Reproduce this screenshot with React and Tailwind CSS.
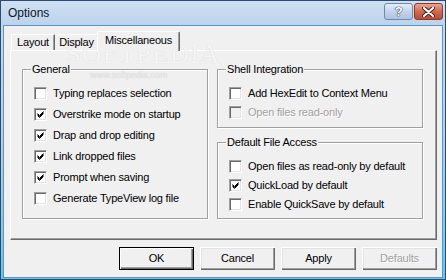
import React from "react";

const font = { fontFamily: '"Liberation Sans", Arial, sans-serif' };

function CheckBox({ checked, disabled }) {
  return (
    <div
      className={`w-[13px] h-[13px] shrink-0 border border-t-[#a0a0a0] border-l-[#a0a0a0] border-b-white border-r-white shadow-[inset_1px_1px_0_#696969,inset_-1px_-1px_0_#e3e3e3] flex items-center justify-center ${
        disabled ? "bg-[#f0f0f0]" : "bg-white"
      }`}
    >
      {checked && (
        <svg width="9" height="9" viewBox="0 0 9 9">
          <path d="M1.5 3.5 L3.5 5.5 L7.5 1.5 M1.5 4.5 L3.5 6.5 L7.5 2.5 M1.5 5.5 L3.5 7.5 L7.5 3.5" stroke="#000" strokeWidth="1" fill="none" />
        </svg>
      )}
    </div>
  );
}

function Row({ label, checked, disabled, h }) {
  return (
    <div className={`flex items-center gap-[6px] ${h}`}>
      <CheckBox checked={checked} disabled={disabled} />
      <span
        className={`leading-[13px] ${
          disabled ? "text-[#a0a0a0] [text-shadow:1px_1px_0_#fff]" : "text-black"
        }`}
      >
        {label}
      </span>
    </div>
  );
}

function Group({ title, className, children }) {
  return (
    <div
      className={`border border-[#a0a0a0] shadow-[inset_1px_1px_0_#fff,1px_1px_0_#fff] flex flex-col ${className}`}
    >
      <div className="-mt-[7px] ml-[8px] w-fit px-[1px] bg-[#f0f0f0] leading-[13px] text-black">
        {title}
      </div>
      {children}
    </div>
  );
}

function Button({ label, isDefault, disabled }) {
  return (
    <div
      className={`w-[75px] h-[23px] flex items-center justify-center ${
        isDefault
          ? "border border-black shadow-[inset_1px_1px_0_#fff,inset_-1px_-1px_0_#696969,inset_-2px_-2px_0_#a0a0a0]"
          : "shadow-[inset_1px_1px_0_#fff,inset_-1px_-1px_0_#696969,inset_-2px_-2px_0_#a0a0a0,inset_2px_2px_0_#e3e3e3]"
      } ${disabled ? "text-[#a0a0a0] [text-shadow:1px_1px_0_#fff]" : "text-black"}`}
    >
      {label}
    </div>
  );
}

export default function App() {
  return (
    <div
      className="w-[446px] h-[280px] border border-[#2b4c6e] bg-gradient-to-b from-[#c6daef] via-[#b4cee9] to-[#5cc8f2] flex flex-col text-[11px] tracking-[-0.2px] overflow-hidden"
      style={font}
    >
      {/* title bar */}
      <div className="h-[24px] flex items-start bg-gradient-to-b from-[#cfe0f2] to-[#bcd3ec]">
        <div className="pl-[7px] pt-[5px] text-[12px] tracking-normal leading-[14px] text-[#10161f] flex-1">
          Options
        </div>
        <div className="flex gap-[1px] mt-[2px] mr-[2px]">
          <div className="w-[29px] h-[17px] rounded-[3px] border border-[#6d89ad] bg-gradient-to-b from-[#e6eef8] via-[#c3d4ea] to-[#aec4e2] flex items-center justify-center">
            <span className="text-white font-bold text-[13px] leading-none [text-shadow:0_0_1px_#2a3f5c,0_0_1px_#2a3f5c,0_0_1px_#2a3f5c]">
              ?
            </span>
          </div>
          <div className="w-[29px] h-[17px] rounded-[3px] border border-[#8c3a2a] bg-gradient-to-b from-[#e8a592] via-[#d06a50] to-[#c04a30] flex items-center justify-center">
            <svg width="13" height="10" viewBox="0 0 13 10">
              <path d="M2 1 L11 9 M11 1 L2 9" stroke="#4a1a10" strokeWidth="4" strokeLinecap="round" />
              <path d="M2 1 L11 9 M11 1 L2 9" stroke="#fff" strokeWidth="2.2" strokeLinecap="round" />
            </svg>
          </div>
        </div>
      </div>

      {/* client */}
      <div className="mx-[2px] mb-[1px] flex-1 border border-[#5b95c4] bg-[#f0f0f0] flex flex-col relative">
        {/* watermark */}
        <div className="absolute left-[62px] top-[15px] pointer-events-none select-none text-[27px] leading-none tracking-[1px] text-[#f5f5f5] [text-shadow:0_0_1px_#cfcfcf]" style={{ fontFamily: '"Liberation Serif", serif' }}>
          SOFTPEDIA
        </div>
        <div className="absolute left-[86px] top-[43px] pointer-events-none select-none text-[9px] tracking-normal text-[#e6e6e6] [text-shadow:0_0_1px_#d0d0d0]">
          www.softpedia.com
        </div>

        {/* tabs */}
        <div className="relative z-10 flex items-end pt-[5px] ml-[7px] h-[24px]">
          <div className="w-[44px] h-[16px] border-l border-t border-white rounded-tl-[2px] shadow-[inset_-1px_0_0_#a0a0a0] border-r border-r-[#696969] flex items-center justify-center leading-[13px]">
            Layout
          </div>
          <div className="w-[44px] h-[16px] border-t border-white rounded-tr-[2px] border-r border-r-[#696969] shadow-[inset_-1px_0_0_#a0a0a0] flex items-center justify-center leading-[13px]">
            Display
          </div>
          <div className="w-[83px] h-[20px] -ml-[2px] -mb-[1px] relative bg-[#f0f0f0] border-l border-t border-white rounded-t-[2px] border-r border-r-[#696969] shadow-[inset_-1px_0_0_#a0a0a0] flex items-start justify-center pt-[2px] leading-[13px]">
            Miscellaneous
          </div>
        </div>

        {/* panel */}
        <div className="ml-[6px] w-[427px] h-[190px] border-t border-l border-white border-r border-b border-r-[#696969] border-b-[#696969] shadow-[inset_-1px_-1px_0_#a0a0a0] flex gap-[9px] pl-[11px] pt-[18px]">
          <Group title="General" className="w-[186px] h-[150px]">
            <div className="mt-[7px] pl-[11px] flex flex-col">
              <Row h="h-[21px]" label="Typing replaces selection" />
              <Row h="h-[21px]" label="Overstrike mode on startup" checked />
              <Row h="h-[21px]" label="Drap and drop editing" checked />
              <Row h="h-[21px]" label="Link dropped files" checked />
              <Row h="h-[21px]" label="Prompt when saving" checked />
              <Row h="h-[21px]" label="Generate TypeView log file" />
            </div>
          </Group>
          <div className="flex flex-col gap-[14px]">
            <Group title="Shell Integration" className="w-[206px] h-[59px]">
              <div className="mt-[8px] pl-[11px] flex flex-col">
                <Row h="h-[19px]" label="Add HexEdit to Context Menu" />
                <Row h="h-[19px]" label="Open files read-only" disabled />
              </div>
            </Group>
            <Group title="Default File Access" className="w-[206px] h-[77px]">
              <div className="mt-[8px] pl-[11px] flex flex-col">
                <Row h="h-[19px]" label="Open files as read-only by default" />
                <Row h="h-[19px]" label="QuickLoad by default" checked />
                <Row h="h-[19px]" label="Enable QuickSave by default" />
              </div>
            </Group>
          </div>
        </div>

        {/* buttons */}
        <div className="mt-[7px] ml-[6px] w-[427px] flex justify-end gap-[6px]">
          <Button label="OK" isDefault />
          <Button label="Cancel" />
          <Button label="Apply" />
          <Button label="Defaults" disabled />
        </div>
      </div>
    </div>
  );
}
